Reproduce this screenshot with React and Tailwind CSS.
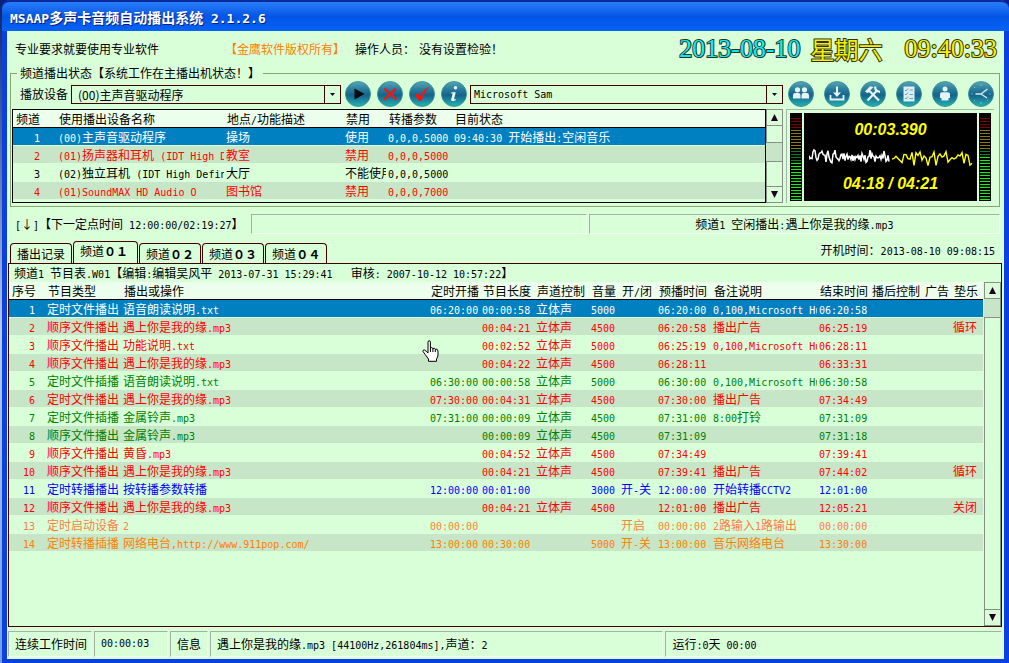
import { useState } from "react";
import { clsx } from "clsx";

const LATIN = /([\x20-\x7e]+)/;

// Half-width characters take exactly half of a hanzi, like in a console font.
function Mix({ text, latin = "text-[10px]" }) {
  return text.split(LATIN).map((part, i) =>
    i % 2 ? (
      <span key={i} className={clsx("font-['DejaVu_Sans_Mono',monospace] leading-none", latin)}>
        {part}
      </span>
    ) : (
      part
    )
  );
}

const CHANNELS = [
  ["1", "(00)主声音驱动程序", "操场", "使用", "0,0,0,5000", "09:40:30 开始播出:空闲音乐"],
  ["2", "(01)扬声器和耳机 (IDT High D", "教室", "禁用", "0,0,0,5000", ""],
  ["3", "(02)独立耳机 (IDT High Defin", "大厅", "不能使用", "0,0,0,5000", ""],
  ["4", "(01)SoundMAX HD Audio O", "图书馆", "禁用", "0,0,0,7000", ""],
];
const CHANNEL_COLORS = ["text-white", "text-[#ff0000]", "text-black", "text-[#ff0000]"];

const PROGRAM_HEAD = [
  "序号", "节目类型", "播出或操作", "定时开播", "节目长度", "声道控制", "音量",
  "开/闭", "预播时间", "备注说明", "结束时间", "播后控制", "广告", "垫乐",
];

const RED = "text-[#ff0000]";
const GREEN = "text-[#008000]";

const PROGRAMS = [
  ["text-white", "定时文件播出", "语音朗读说明.txt", "06:20:00", "00:00:58", "立体声", "5000", "", "06:20:00", "0,100,Microsoft Hu", "06:20:58", "", "", ""],
  [RED, "顺序文件播出", "遇上你是我的缘.mp3", "", "00:04:21", "立体声", "4500", "", "06:20:58", "播出广告", "06:25:19", "", "", "循环"],
  [RED, "顺序文件播出", "功能说明.txt", "", "00:02:52", "立体声", "5000", "", "06:25:19", "0,100,Microsoft Hu", "06:28:11", "", "", ""],
  [RED, "顺序文件播出", "遇上你是我的缘.mp3", "", "00:04:22", "立体声", "4500", "", "06:28:11", "", "06:33:31", "", "", ""],
  [GREEN, "定时文件插播", "语音朗读说明.txt", "06:30:00", "00:00:58", "立体声", "5000", "", "06:30:00", "0,100,Microsoft Hu", "06:30:58", "", "", ""],
  [RED, "定时文件播出", "遇上你是我的缘.mp3", "07:30:00", "00:04:31", "立体声", "4500", "", "07:30:00", "播出广告", "07:34:49", "", "", ""],
  [GREEN, "定时文件插播", "金属铃声.mp3", "07:31:00", "00:00:09", "立体声", "4500", "", "07:31:00", "8:00打铃", "07:31:09", "", "", ""],
  [GREEN, "顺序文件播出", "金属铃声.mp3", "", "00:00:09", "立体声", "4500", "", "07:31:09", "", "07:31:18", "", "", ""],
  [RED, "顺序文件播出", "黄昏.mp3", "", "00:04:52", "立体声", "4500", "", "07:34:49", "", "07:39:41", "", "", ""],
  [RED, "顺序文件播出", "遇上你是我的缘.mp3", "", "00:04:21", "立体声", "4500", "", "07:39:41", "播出广告", "07:44:02", "", "", "循环"],
  ["text-[#0000ff]", "定时转播播出", "按转播参数转播", "12:00:00", "00:01:00", "", "3000", "开-关", "12:00:00", "开始转播CCTV2", "12:01:00", "", "", ""],
  [RED, "顺序文件播出", "遇上你是我的缘.mp3", "", "00:04:21", "立体声", "4500", "", "12:01:00", "播出广告", "12:05:21", "", "", "关闭"],
  ["text-[#ff8040]", "定时启动设备", "2", "00:00:00", "", "", "", "开启", "00:00:00", "2路输入1路输出", "00:00:00", "", "", ""],
  ["text-[#ff8000]", "定时转播插播", "网络电台,http://www.911pop.com/", "13:00:00", "00:30:00", "", "5000", "开-关", "13:00:00", "音乐网络电台", "13:30:00", "", "", ""],
];

const TABS = ["播出记录", "频道０１", "频道０２", "频道０３", "频道０４"];

function RoundButton({ label, children }) {
  return (
    <button type="button" aria-label={label} className="size-[26px] shrink-0">
      <svg viewBox="0 0 26 26" className="size-full">
        <defs>
          <linearGradient id="teal" x1="0" y1="0" x2="0" y2="1">
            <stop offset="0" stopColor="#58a5b4" />
            <stop offset="0.3" stopColor="#2b7f9c" />
            <stop offset="0.55" stopColor="#15648a" />
            <stop offset="1" stopColor="#27b3b4" />
          </linearGradient>
        </defs>
        <circle cx="13" cy="13" r="12.5" fill="url(#teal)" stroke="#2f8a92" strokeWidth="0.8" />
        {children}
      </svg>
    </button>
  );
}

function Combo({ label, options, className, latin }) {
  return (
    <div className={clsx("flex h-[19px] min-w-0 border border-[#400000]", className)}>
      <select
        aria-label={label}
        className={clsx(
          "min-w-0 flex-1 appearance-none bg-transparent outline-none",
          latin ? "pl-[3px] font-['DejaVu_Sans_Mono',monospace] text-[10px]" : "pl-[6px] text-[12px]"
        )}
      >
        {options.map((o) => (
          <option key={o}>{o}</option>
        ))}
      </select>
      <span className="flex w-4 items-center justify-center border-l border-[#400000]">
        <svg viewBox="0 0 5 3" className="h-[3px] w-[5px]">
          <path d="M0 0h5L2.500 3z" fill="#200020" />
        </svg>
      </span>
    </div>
  );
}

function ScrollArrow({ down }) {
  return (
    <button
      type="button"
      aria-label={down ? "向下滚动" : "向上滚动"}
      className="flex h-[17px] w-full shrink-0 items-center justify-center border border-[#868e86]"
    >
      <svg viewBox="0 0 7 7" className="size-[7px]">
        <path d={down ? "M0 0h7L3.500 7z" : "M0 7h7L3.500 0z"} fill="#200020" />
      </svg>
    </button>
  );
}

// dark is the number of unlit green bars
function Meter({ dark }) {
  return (
    <div className="flex w-3 flex-col justify-end gap-[2px] bg-black px-px pb-px">
      {Array.from({ length: 28 }, (_, i) => (
        <span
          key={i}
          className={clsx(
            "h-px",
            i < 4 ? "bg-[#800000]" : i < 11 ? "bg-[#8a7a10]" : i < 11 + dark ? "bg-[#008020]" : "bg-[#00ff00]"
          )}
        />
      ))}
    </div>
  );
}

function wave(from, to, step, amp, seed) {
  const pts = [];
  let s = seed;
  for (let x = from, i = 0; x <= to; x += step, i++) {
    s = (s * 1103 + 4721) % 9973;
    const noise = s / 9973 - 0.5;
    const v = Math.sin(i * 0.9 * step) * 0.4 + noise * 1.3;
    pts.push(`${x},${(10 + v * amp).toFixed(1)}`);
  }
  return pts.join(" ");
}

function Player() {
  return (
    <div className="flex w-[208px] shrink-0 gap-[2px] border-t border-l border-[#a5b8a5] pt-[3px] pr-[3px] pb-[2px] pl-[3px]">
      <Meter dark={4} />
      <div className="flex flex-1 flex-col items-center justify-between bg-black py-[5px] font-['Liberation_Sans',sans-serif] text-[16px] leading-6 font-bold text-[#ffff00] italic">
        <span>00:03.390</span>
        <svg viewBox="0 0 164 20" className="h-5 w-[164px]" fill="none">
          <polyline points={wave(0, 80, 1, 7, 17)} stroke="#fff" strokeWidth="1.500" />
          <polyline points={wave(83, 164, 2, 9, 29)} stroke="#ffff00" strokeWidth="1.400" />
        </svg>
        <span>04:18 / 04:21</span>
      </div>
      <Meter dark={2} />
    </div>
  );
}

function Inset({ className, children }) {
  return (
    <div
      className={clsx(
        "flex items-center border border-t-[#a5b0a5] border-r-[#f4fff4] border-b-[#f4fff4] border-l-[#a5b0a5]",
        className
      )}
    >
      {children}
    </div>
  );
}

function rowBg(i) {
  if (i === 0) return "bg-[#0080c0]";
  return i % 2 ? "bg-[#c7e6c7]" : "";
}

const TD = "h-[18px] overflow-hidden border-b border-[#d9ffd9] p-0 pl-[2px] leading-[17px]";
const TH = "h-[18px] overflow-hidden border-b border-black p-0 pl-[3px] text-left leading-[17px] font-normal";

function ChannelTable() {
  return (
    <div className="min-w-0 flex-1 border border-black pb-[2px]">
      <table className="w-full table-fixed border-separate border-spacing-0">
        <colgroup>
          <col className="w-[43px]" />
          <col className="w-[168px]" />
          <col className="w-[119px]" />
          <col className="w-[43px]" />
          <col className="w-[66px]" />
          <col />
        </colgroup>
        <thead className="bg-[#ecffec]">
          <tr>
            {["频道", "使用播出设备名称", "地点/功能描述", "禁用", "转播参数", "目前状态"].map((h) => (
              <th key={h} className={TH}>
                <Mix text={h} />
              </th>
            ))}
          </tr>
        </thead>
        <tbody>
          {CHANNELS.map((row, i) => (
            <tr key={row[0]} className={clsx(rowBg(i), CHANNEL_COLORS[i])}>
              {row.map((cell, c) => (
                <td key={c} className={clsx(TD, c === 0 && "pr-4 text-right")}>
                  <Mix text={cell} />
                </td>
              ))}
            </tr>
          ))}
        </tbody>
      </table>
    </div>
  );
}

function ProgramTable() {
  return (
    <table className="w-full table-fixed border-separate border-spacing-0">
      <colgroup>
        <col className="w-[36px]" />
        <col className="w-[76px]" />
        <col />
        <col className="w-[52px]" />
        <col className="w-[54px]" />
        <col className="w-[55px]" />
        <col className="w-[30px]" />
        <col className="w-[37px]" />
        <col className="w-[55px]" />
        <col className="w-[106px]" />
        <col className="w-[52px]" />
        <col className="w-[53px]" />
        <col className="w-[29px]" />
        <col className="w-[32px]" />
      </colgroup>
      <thead className="bg-[#ecffec]">
        <tr>
          {PROGRAM_HEAD.map((h) => (
            <th key={h} className={TH}>
              <Mix text={h} />
            </th>
          ))}
        </tr>
      </thead>
      <tbody>
        {PROGRAMS.map(([color, ...cells], i) => (
          <tr key={i} className={clsx(rowBg(i), color)}>
            <td className={clsx(TD, "pr-[10px] text-right")}>
              <Mix text={String(i + 1)} />
            </td>
            {cells.map((cell, c) => (
              <td key={c} className={TD}>
                <Mix text={cell} />
              </td>
            ))}
          </tr>
        ))}
      </tbody>
    </table>
  );
}

export default function App() {
  const [tab, setTab] = useState(1);

  return (
    <div className="flex min-h-screen bg-[#0a1f8f] font-['Noto_Sans_CJK_SC',sans-serif] text-[12px] leading-[18px] whitespace-pre text-black">
      <div className="w-[2px] bg-gradient-to-b from-[#0a246a] via-[#b9c8ee] to-[#6f9fe8]" />
      <div className="flex min-w-0 flex-1 flex-col rounded-t-lg border-r-[5px] border-b-4 border-l-[5px] border-[#0a3fe0] bg-[#d9ffd9]">
        <header className="-mx-[5px] flex h-[31px] items-center rounded-t-lg border-t-2 border-[#0a2a9a] bg-gradient-to-b from-[#2a7dfa] via-[#0355e4] to-[#0463f8] pl-2">
          <h1 className="text-[14px] font-bold text-white [text-shadow:1px_1px_0_#0a1e80]">
            <Mix text="MSAAP多声卡音频自动播出系统 2.1.2.6" latin="text-[13px]" />
          </h1>
        </header>

        <div className="flex h-9 items-center pr-[7px] pl-2">
          <span>专业要求就要使用专业软件</span>
          <span className="ml-[66px] text-[#ff8000]">【金鹰软件版权所有】</span>
          <span className="ml-[10px] flex gap-1">
            <span>操作人员：</span>
            <span>没有设置检验！</span>
          </span>
          <div className="ml-auto flex items-center gap-[10px] text-2xl text-[#f5f000] [-webkit-text-stroke:2px_#303018] [paint-order:stroke_fill]">
            <span className="font-['Liberation_Serif',serif] text-[26px] text-[#00f0ff]">2013-08-10</span>
            <span>星期六</span>
            <span className="ml-3 font-['Liberation_Serif',serif] text-[26px]">09:40:33</span>
          </div>
        </div>

        <fieldset className="mr-1 ml-[3px] border border-[#86a870] pr-[5px] pb-[3px] pl-px">
          <legend className="ml-[5px] h-3 px-[3px] leading-3">频道播出状态【系统工作在主播出机状态！】</legend>
          <div className="flex h-[30px] items-center pl-2">
            <span className="mr-[3px]">播放设备</span>
            <Combo label="播放设备" options={["(00)主声音驱动程序"]} className="w-[270px]" />
            <div className="ml-1 flex gap-[6px]">
              <RoundButton label="播放">
                <path d="M9.500 7.500v11l10-5.500z" fill="#0a0a10" />
              </RoundButton>
              <RoundButton label="停止">
                <path d="M7.500 7.500l12 11M19 7.500L7 19" stroke="#ff1010" strokeWidth="2.200" fill="none" />
              </RoundButton>
              <RoundButton label="确认">
                <path d="M6 14l3-2 2.500 3.200c2-4.700 4.800-7.700 9-9.700-3.700 3.700-5.800 8-8 14l-2.500.5z" fill="#ff1010" />
              </RoundButton>
              <RoundButton label="信息">
                <circle cx="14.500" cy="6.800" r="1.700" fill="#e8f6fa" />
                <path d="M10.500 11.200h4.300l-1.900 7.200 2-.7-.4 1.500c-2.500 1.300-4.800 1.200-4.300-1l1.500-5.600-1.600-.2z" fill="#e8f6fa" />
              </RoundButton>
            </div>
            <Combo label="语音" options={["Microsoft Sam"]} className="ml-[3px] flex-1" latin />
            <div className="ml-[5px] flex gap-[10px]">
              <RoundButton label="用户">
                <g fill="#e3f3f8">
                  <circle cx="9.500" cy="8.800" r="2.600" />
                  <circle cx="16.500" cy="8.800" r="2.600" />
                  <path d="M5 17.500v-3.300q0-2.200 2.200-2.200h3.100q2.200 0 2.200 2.200v3.300zM13.500 17.500v-3.300q0-2.200 2-2.200h3.300q2.200 0 2.200 2.200v3.300z" />
                </g>
              </RoundButton>
              <RoundButton label="下载">
                <path d="M12 5.500h2v6h3l-4 4.500-4-4.500h3z" fill="#e3f3f8" />
                <path d="M6.500 14v4.500h13V14" stroke="#e3f3f8" strokeWidth="1.800" fill="none" />
              </RoundButton>
              <RoundButton label="设置">
                <path d="M9 9.500l10 10M17.500 9L7.500 19.500" stroke="#e3f3f8" strokeWidth="2.200" fill="none" />
                <path d="M5 10.500l5-5.200 3.500.8-5.800 6.200z" fill="#e3f3f8" />
                <path d="M15.200 5.500q-.5 5 4.800 5.300" stroke="#e3f3f8" strokeWidth="2.200" fill="none" />
              </RoundButton>
              <RoundButton label="清单">
                <path d="M7.500 5.500h11v15h-11z" fill="#dceff5" />
                <path d="M9 9l1 1 2-2.500M9 13l1 1 2-2.500M9 17l1 1 2-2.500M13.500 9h3.500M13.500 13.500h3.500M13.500 17.500h3.500" stroke="#4a90a8" strokeWidth="0.800" fill="none" />
              </RoundButton>
              <RoundButton label="个人">
                <circle cx="13" cy="8" r="2.500" fill="#e3f3f8" />
                <path d="M8 17v-3.700q0-2 2.200-2h5.600q2.200 0 2.200 2V17h-1.500v2.500h-7V17z" fill="#e3f3f8" />
              </RoundButton>
              <RoundButton label="时钟">
                <path d="M19.500 8L13 13H7.500M13 13l6 4" stroke="#d3ebf1" strokeWidth="1.400" fill="none" />
                <path d="M13 3.500v1M13 21.500v1M3.500 13h1M21.500 13h1M6.300 6.300l.6.600M19.100 19.100l.6.600M6.300 19.700l.6-.6" stroke="#bfe0e8" strokeWidth="1" />
              </RoundButton>
            </div>
          </div>

          <div className="flex">
            <ChannelTable />
            <div className="mr-[3px] flex w-[17px] shrink-0 flex-col">
              <ScrollArrow />
              <div className="h-[17px] border-x border-b border-[#868e86]" />
              <div className="h-[18px] border-r border-[#868e86] bg-[#c7e6c7]" />
              <div className="flex-1 border-x border-t border-[#868e86]" />
              <ScrollArrow down />
            </div>
            <Player />
          </div>
        </fieldset>

        <div className="mt-[7px] mr-1 flex h-5 items-center gap-[2px] pl-2">
          <span className="w-[234px] shrink-0">
            <Mix text="[↓]【下一定点时间 12:00:00/02:19:27】" />
          </span>
          <Inset className="h-full flex-[336]" />
          <Inset className="h-full flex-[412] justify-center">
            <span>
              <Mix text="频道1 空闲播出:遇上你是我的缘.mp3" />
            </span>
          </Inset>
        </div>

        <div className="mt-[7px] flex items-end pr-[9px] pl-[3px]">
          <div role="tablist" className="flex items-end gap-px">
            {TABS.map((t, i) => (
              <button
                key={t}
                type="button"
                role="tab"
                aria-selected={tab === i}
                onClick={() => setTab(i)}
                className={clsx(
                  "rounded-t-[4px] border border-b-0 border-[#400000] px-[6px]",
                  tab === i ? "relative -mb-px h-[23px] bg-[#d9ffd9] pr-[9px] pb-1" : "h-[20px]"
                )}
              >
                {t.slice(0, i ? 2 : 4)}
                {i > 0 && <b>{t.slice(2)}</b>}
              </button>
            ))}
          </div>
          <span className="ml-auto pb-1">
            <Mix text="开机时间：2013-08-10 09:08:15" />
          </span>
        </div>

        <main className="relative mr-[2px] ml-px flex flex-1 flex-col border border-[#400000]">
          <p className="h-[18px] pl-[5px]">
            <Mix text="频道1 节目表.W01【编辑:编辑吴风平 2013-07-31 15:29:41   审核: 2007-10-12 10:57:22】" />
          </p>
          <div className="flex flex-1">
            <div className="min-w-0 flex-1">
              <ProgramTable />
            </div>
            <div className="ml-px flex w-[17px] flex-col">
              <ScrollArrow />
              <div className="h-[18px] border-r border-[#868e86] bg-[#c7e6c7]" />
              <div className="flex-1 border-x border-t border-[#868e86]" />
              <ScrollArrow down />
            </div>
          </div>
          <svg viewBox="0 0 17 22" className="absolute top-[76px] left-[413px] h-[22px] w-[17px]">
            <path
              d="M6 13V2.200Q6 .7 7.200.7T8.400 2.200V8q1.300-1 2.500.5 1.500-.8 2.400.7 2.400-.6 2.700 1.800V15q0 2-1.500 4v2.300H6.500V19L3.200 14.500 1 11.500Q.6 9.500 2.800 10z"
              fill="#fff"
              stroke="#000"
            />
            <path d="M8.400 8v4M10.900 8.500V12M13.300 9.200V12" stroke="#000" />
          </svg>
        </main>

        <footer className="mt-1 mr-[2px] mb-[2px] ml-px flex h-[26px] gap-[2px]">
          <Inset className="w-[84px] pl-[6px]">连续工作时间</Inset>
          <Inset className="w-[74px] pl-[6px]">
            <Mix text="00:00:03" />
          </Inset>
          <Inset className="w-[38px] pl-[6px]">信息</Inset>
          <Inset className="flex-[454] pl-[6px]">
            <span>
              <Mix text="遇上你是我的缘.mp3 [44100Hz,261804ms],声道：2" />
            </span>
          </Inset>
          <Inset className="flex-[335] pl-[6px]">
            <span>
              <Mix text="运行:0天 00:00" />
            </span>
          </Inset>
        </footer>
      </div>
    </div>
  );
}
